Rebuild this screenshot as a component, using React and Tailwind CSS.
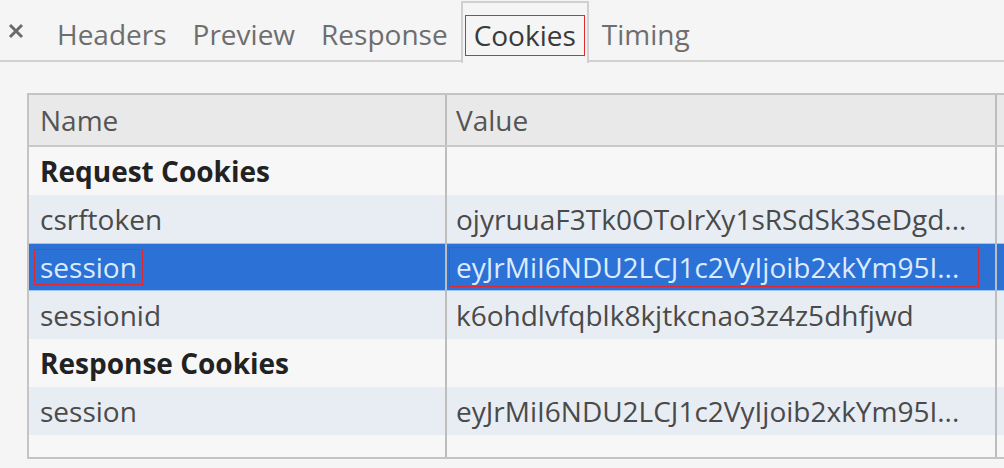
const rows = [
  { type: 'group', name: 'Request Cookies' },
  { type: 'cookie', name: 'csrftoken', value: 'ojyruuaF3Tk0OToIrXy1sRSdSk3SeDgd...' },
  { type: 'cookie', name: 'session', value: 'eyJrMiI6NDU2LCJ1c2VyIjoib2xkYm95I...', selected: true },
  { type: 'cookie', name: 'sessionid', value: 'k6ohdlvfqblk8kjtkcnao3z4z5dhfjwd' },
  { type: 'group', name: 'Response Cookies' },
  { type: 'cookie', name: 'session', value: 'eyJrMiI6NDU2LCJ1c2VyIjoib2xkYm95I...' },
]

function Tab({ label, active }) {
  if (active) {
    return (
      <div className="mb-[-2px] mt-[2px] flex h-[62px] items-center border-x-2 border-t-2 border-[#d0d0d0] bg-[#f5f5f5] px-[2px] pt-[5px]">
        <span className="border border-[#e0282e] px-[8px] leading-[39px] text-[#3a3a3a]">{label}</span>
      </div>
    )
  }
  return <div className="flex h-[62px] items-center px-[13px] pt-[7px] text-[#6e6e6e]">{label}</div>
}

function Row({ row, odd }) {
  const bg = row.selected ? 'bg-[#2b71d6] border-y border-[#9cc2f0]' : odd ? 'bg-[#e8edf4]' : 'bg-[#f7f7f7]'
  const text = row.selected ? 'text-[#dcebff]' : 'text-[#4a4a4a]'
  return (
    <div className={`flex h-[48px] ${bg}`}>
      <div className="flex w-[418px] items-center border-r-2 border-[#bdbdbd] pl-[5px]">
        {row.type === 'group' ? (
          <span className="pl-[6px] font-bold text-[#222]">{row.name}</span>
        ) : row.selected ? (
          <span className={`border border-[#e0282e] px-[5px] leading-[34px] ${text}`}>{row.name}</span>
        ) : (
          <span className={`pl-[6px] ${text}`}>{row.name}</span>
        )}
      </div>
      <div className="flex w-[550px] items-center border-r-2 border-[#bdbdbd] pl-[2px]">
        {row.selected ? (
          <span className={`w-[530px] border border-[#e0282e] pl-[6px] leading-[38px] ${text}`}>{row.value}</span>
        ) : (
          <span className={`pl-[7px] ${text}`}>{row.value}</span>
        )}
      </div>
      <div className="flex-1" />
    </div>
  )
}

export default function App() {
  return (
    <div className="h-[468px] w-[1004px] overflow-hidden bg-[#f5f5f5] font-['Open_Sans',sans-serif] text-[28px]">
      {/* Tab strip */}
      <div className="flex h-[62px] items-center border-b-2 border-[#d0d0d0] pl-[8px]">
        <svg viewBox="0 0 16 16" className="mr-[20px] mt-[2px] h-[16px] w-[16px]" fill="none" stroke="#6b6b6b" strokeWidth="3">
          <path d="M2 2 14 14M14 2 2 14" />
        </svg>
        <div className="flex items-center">
          <Tab label="Headers" />
          <Tab label="Preview" />
          <Tab label="Response" />
          <Tab label="Cookies" active />
          <Tab label="Timing" />
        </div>
      </div>

      {/* Cookies table */}
      <div className="ml-[27px] mt-[31px] w-[1010px] border-2 border-[#c4c4c4] bg-[#f7f7f7]">
        <div className="flex h-[52px] border-b-2 border-[#c8c8c8] bg-[#e9e9e9] text-[#555]">
          <div className="flex w-[418px] items-center border-r-2 border-[#bdbdbd] pl-[11px]">Name</div>
          <div className="flex w-[550px] items-center border-r-2 border-[#bdbdbd] pl-[9px]">Value</div>
          <div className="flex-1" />
        </div>
        {rows.map((row, i) => (
          <Row key={i} row={row} odd={i % 2 === 1} />
        ))}
        <div className="flex h-[22px]">
          <div className="w-[418px] border-r-2 border-[#bdbdbd]" />
          <div className="w-[550px] border-r-2 border-[#bdbdbd]" />
        </div>
      </div>
    </div>
  )
}
